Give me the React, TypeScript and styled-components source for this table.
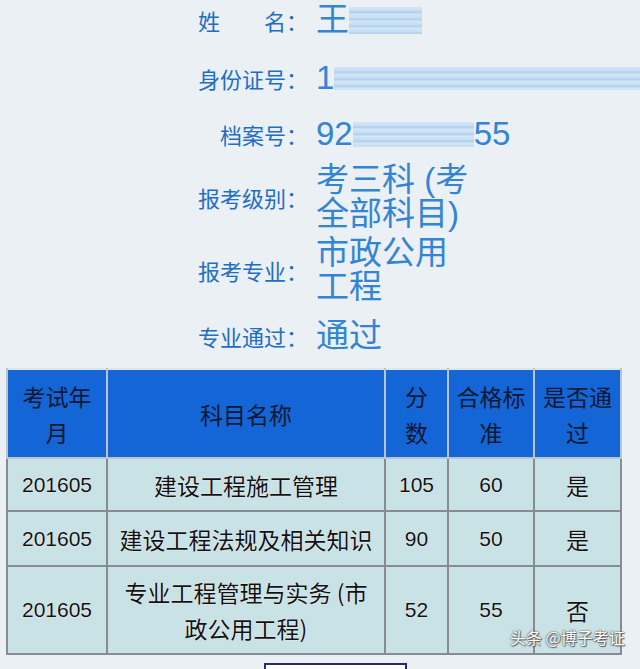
import React from "react";
import styled, { createGlobalStyle } from "styled-components";

const GlobalStyle = createGlobalStyle`
  html, body {
    margin: 0;
    padding: 0;
    background: #eaf0f4;
  }
  body {
    font-family: "Noto Sans CJK SC", "Liberation Sans", sans-serif;
  }
`;

const Page = styled.div`
  position: relative;
  width: 640px;
  height: 669px;
  overflow: hidden;
  background: #eaf0f4;
`;

const InfoBlock = styled.div`
  display: flex;
  flex-direction: column;
  margin-top: -9px;
`;

const InfoRow = styled.div<{ $h: number }>`
  display: grid;
  grid-template-columns: 308px auto;
  column-gap: 8px;
  align-items: center;
  height: ${(p) => p.$h}px;
`;

const Label = styled.div`
  justify-self: end;
  font-family: "Noto Sans CJK SC", sans-serif;
  font-size: 22px;
  line-height: 26px;
  color: #1f6ec4;
  white-space: pre;
`;

const Value = styled.div`
  font-family: "Liberation Sans", "Noto Sans CJK SC", sans-serif;
  font-size: 33px;
  line-height: 34px;
  color: #3384d3;
  white-space: pre;
  display: flex;
  flex-direction: column;
`;

const ValueLine = styled.span`
  display: flex;
  align-items: center;
`;

const Redact = styled.span<{ $w: number; $h: number }>`
  display: inline-block;
  width: ${(p) => p.$w}px;
  height: ${(p) => p.$h}px;
  flex: none;
  background: repeating-linear-gradient(
    180deg,
    #d3e6f5 0px,
    #c6def2 4px,
    #aacdeb 5px,
    #d0e4f5 7px
  );
`;

const Table = styled.table`
  margin: 3px 0 0 6px;
  border-collapse: collapse;
  border-top: 2px solid #dfe7ec;
`;

const HeadCell = styled.th<{ $w: number }>`
  width: ${(p) => p.$w}px;
  background: #1465d6;
  color: #0d1833;
  font-family: "Noto Sans CJK SC", sans-serif;
  font-weight: normal;
  font-size: 23px;
  line-height: 36px;
  text-align: center;
  vertical-align: middle;
  padding: 0;
  border: 2px solid #b9c4cf;
  border-top: none;
  white-space: nowrap;
`;

const HeadRow = styled.tr`
  height: 89px;
`;

const BodyRow = styled.tr<{ $h: number }>`
  height: ${(p) => p.$h}px;
`;

const Cell = styled.td<{ $num?: boolean }>`
  background: #c8e2e5;
  color: #111;
  font-family: ${(p) =>
    p.$num ? `"Liberation Sans", sans-serif` : `"Noto Sans CJK SC", sans-serif`};
  font-size: ${(p) => (p.$num ? "21px" : "23px")};
  line-height: 36px;
  text-align: center;
  vertical-align: middle;
  padding: 0;
  border: 2px solid #868c92;
  white-space: nowrap;
  text-shadow: 0 0 1px #ffffff, 0 0 1px #ffffff;
`;

const ButtonStub = styled.div`
  margin: 8px 0 0 264px;
  width: 139px;
  height: 30px;
  background: #ffffff;
  border: 2px solid #2b2a6b;
`;

const Watermark = styled.div`
  position: absolute;
  left: 510px;
  top: 626px;
  font-family: "Noto Sans CJK SC", sans-serif;
  font-size: 16px;
  line-height: 22px;
  color: #ffffff;
  text-shadow: 0 0 1px #555, 0 0 2px #555, 1px 1px 1px #666;
  white-space: nowrap;
`;

type Row = {
  month: string;
  subject: string[];
  score: string;
  pass: string;
  ok: string;
  h: number;
};

const rows: Row[] = [
  { month: "201605", subject: ["建设工程施工管理"], score: "105", pass: "60", ok: "是", h: 53 },
  { month: "201605", subject: ["建设工程法规及相关知识"], score: "90", pass: "50", ok: "是", h: 55 },
  {
    month: "201605",
    subject: ["专业工程管理与实务 (市", "政公用工程)"],
    score: "52",
    pass: "55",
    ok: "否",
    h: 88,
  },
];

const lines = (arr: string[]) =>
  arr.map((t, i) => (
    <React.Fragment key={i}>
      {i > 0 && <br />}
      {t}
    </React.Fragment>
  ));

export default function App() {
  return (
    <Page>
      <GlobalStyle />
      <InfoBlock>
        <InfoRow $h={58}>
          <Label>姓　　名：</Label>
          <Value>
            <ValueLine>
              王<Redact $w={73} $h={27} />
            </ValueLine>
          </Value>
        </InfoRow>
        <InfoRow $h={58}>
          <Label>身份证号：</Label>
          <Value>
            <ValueLine>
              1<Redact $w={320} $h={23} />
            </ValueLine>
          </Value>
        </InfoRow>
        <InfoRow $h={54}>
          <Label>档案号：</Label>
          <Value>
            <ValueLine>
              92<Redact $w={121} $h={25} />55
            </ValueLine>
          </Value>
        </InfoRow>
        <InfoRow $h={72}>
          <Label>报考级别：</Label>
          <Value>
            <ValueLine>考三科 (考</ValueLine>
            <ValueLine>全部科目)</ValueLine>
          </Value>
        </InfoRow>
        <InfoRow $h={74}>
          <Label>报考专业：</Label>
          <Value>
            <ValueLine>市政公用</ValueLine>
            <ValueLine>工程</ValueLine>
          </Value>
        </InfoRow>
        <InfoRow $h={58}>
          <Label>专业通过：</Label>
          <Value>
            <ValueLine>通过</ValueLine>
          </Value>
        </InfoRow>
      </InfoBlock>

      <Table>
        <thead>
          <HeadRow>
            <HeadCell $w={98}>{lines(["考试年", "月"])}</HeadCell>
            <HeadCell $w={276}>科目名称</HeadCell>
            <HeadCell $w={61}>{lines(["分", "数"])}</HeadCell>
            <HeadCell $w={84}>{lines(["合格标", "准"])}</HeadCell>
            <HeadCell $w={85}>{lines(["是否通", "过"])}</HeadCell>
          </HeadRow>
        </thead>
        <tbody>
          {rows.map((r, i) => (
            <BodyRow key={i} $h={r.h}>
              <Cell $num>{r.month}</Cell>
              <Cell>{lines(r.subject)}</Cell>
              <Cell $num>{r.score}</Cell>
              <Cell $num>{r.pass}</Cell>
              <Cell>{r.ok}</Cell>
            </BodyRow>
          ))}
        </tbody>
      </Table>

      <ButtonStub />
      <Watermark>头条 @博子考证</Watermark>
    </Page>
  );
}
